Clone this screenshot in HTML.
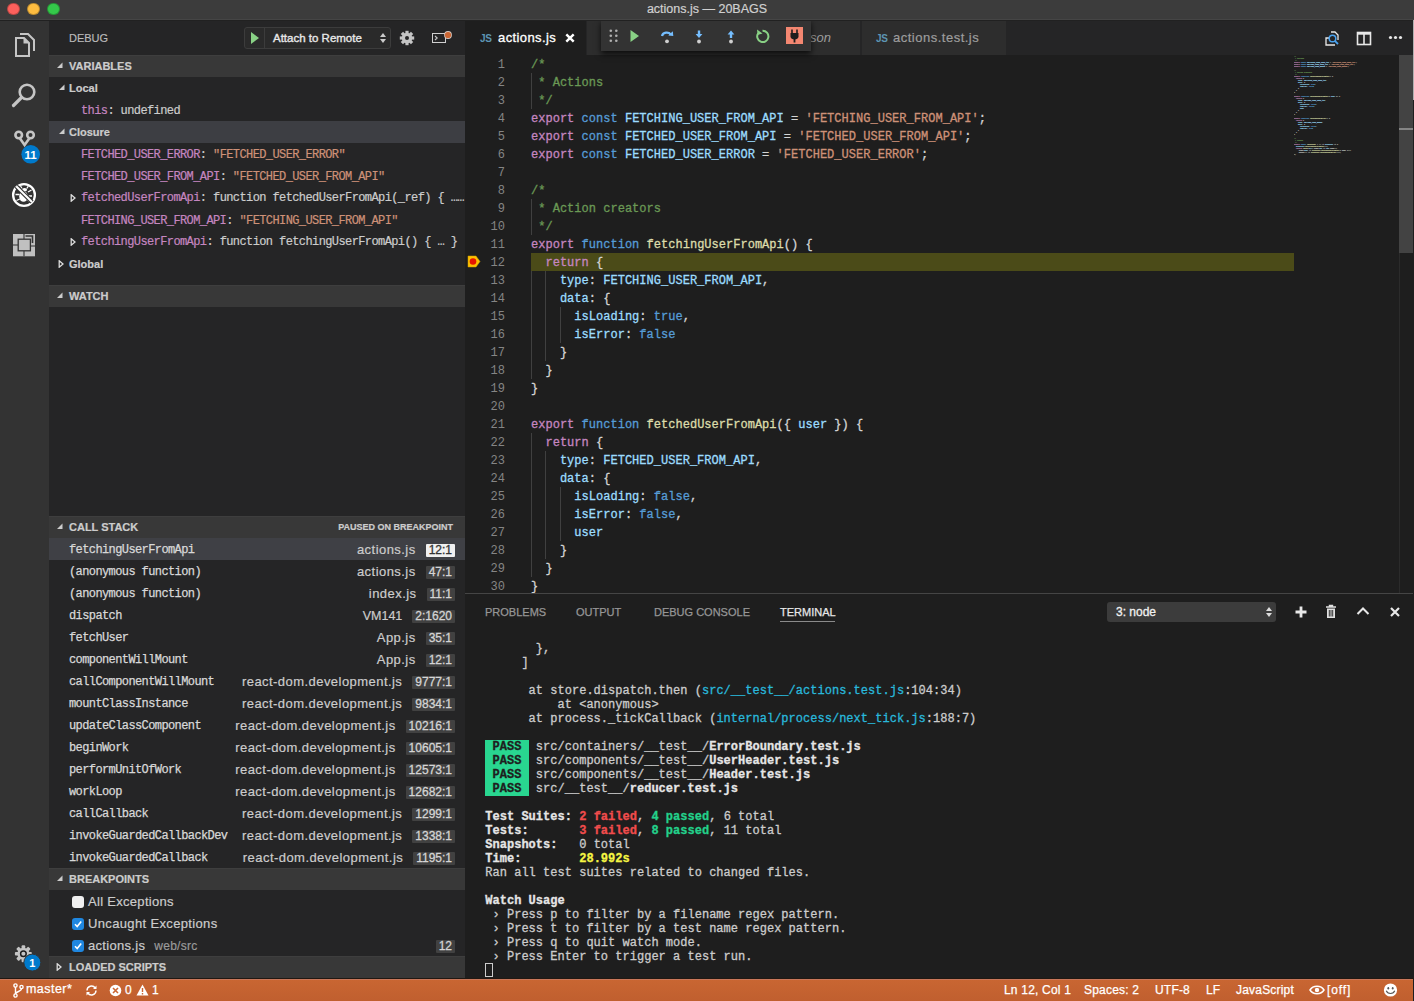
<!DOCTYPE html>
<html><head><meta charset="utf-8">
<style>
*{box-sizing:border-box;margin:0;padding:0}
html,body{width:1414px;height:1001px;overflow:hidden;background:#1e1e1e;font-family:"Liberation Sans",sans-serif;}
.abs{position:absolute}
#title{left:0;top:0;width:1414px;height:20px;background:#3c3c3c;box-shadow:inset 0 -1px 0 #454545;z-index:2}
#title .t{position:absolute;left:0;width:1414px;top:2px;text-align:center;color:#d0d0d0;-webkit-text-stroke:0.2px currentColor;font-size:12.5px;line-height:14px}
.tl{position:absolute;top:2.5px;width:12.5px;height:12.5px;border-radius:50%;border:0.6px solid rgba(0,0,0,0.25)}
#act{left:0;top:20px;width:49px;height:959px;background:#333333}
#side{left:49px;top:20px;width:416px;height:959px;background:#252526;overflow:hidden}
#editor{left:465px;top:20px;width:949px;height:959px;background:#1e1e1e}
#status{left:0;top:979px;width:1414px;height:22px;background:linear-gradient(#c96632,#c05f2f);box-shadow:inset 0 1px 0 #c9775a;color:#fff;font-size:12px}
.mono{font-family:"Liberation Mono",monospace;-webkit-text-stroke:0.25px currentColor}
.sh{position:absolute;left:0;width:416px;height:22px;background:#383838;color:#cccccc;font-weight:bold;font-size:11px;line-height:22px;-webkit-text-stroke:0.2px currentColor;box-shadow:inset 0 1px 0 #3e3e3e}
.sh .tri{position:absolute;left:8px;top:0}
.sh .lab{position:absolute;left:20px;top:0}
.row{position:absolute;left:0;width:416px;height:22px;line-height:22px;color:#cccccc;white-space:nowrap;-webkit-text-stroke:0.2px currentColor}
.fn{letter-spacing:0.45px}
.badge{display:inline-block;background:#414141;color:#d4d4d4;font-size:12px;line-height:13px;height:13px;padding:0 3px;border-radius:1px;margin-left:10px;vertical-align:0px;letter-spacing:0;-webkit-text-stroke:0.3px currentColor}
.badge.sel{background:#f0f0f0;color:#333}
.jsi{font-size:10px;color:#5d95b3;font-weight:bold;line-height:12px;letter-spacing:-0.3px;margin-top:1.5px}
.tabt{top:20px;height:35px;line-height:35px;font-size:13px}
.ln{position:absolute;left:465px;width:40px;text-align:right;font-family:"Liberation Mono",monospace;font-size:12px;line-height:18px;height:18px;color:#858585}
.cl{position:absolute;left:531px;letter-spacing:0.02px;-webkit-text-stroke:0.3px currentColor;font-family:"Liberation Mono",monospace;font-size:12px;line-height:18px;height:18px;white-space:pre;color:#d4d4d4}
.ig{position:absolute;width:1px;background:#404040}
.bphl{position:absolute;left:531px;top:253px;width:763px;height:18px;background:#4b4b18}
.c{color:#6a9955}.k{color:#c586c0}.s{color:#569cd6}.v{color:#9cdcfe}.t{color:#ce9178}.f{color:#dcdcaa}.p{color:#9cdcfe}.b{color:#569cd6}.d{color:#d4d4d4}
.ptab{top:593px;height:38px;line-height:38px;font-size:11px;color:#969696;-webkit-text-stroke:0.25px currentColor}
.tl2{position:absolute;left:485.3px;letter-spacing:0.02px;-webkit-text-stroke:0.3px currentColor;font-family:"Liberation Mono",monospace;font-size:12px;line-height:14px;height:14px;white-space:pre;color:#cccccc}
.xl{color:#29b8db}.xB{font-weight:bold;color:#e5e5e5}.xR{color:#f14c4c;font-weight:bold}.xG{color:#23d18b;font-weight:bold}.xY{color:#f5f543;font-weight:bold}
.xpass{background:#29d690;color:#1e1e1e;font-weight:bold}
.sbt{position:absolute;top:0;height:22px;line-height:22px;font-size:12px;color:#fff;letter-spacing:0.2px;-webkit-text-stroke:0.25px currentColor}
</style></head><body>
<div id="title" class="abs">
  <div class="tl" style="left:7px;background:#fc605c"></div>
  <div class="tl" style="left:27px;background:#fdbc40"></div>
  <div class="tl" style="left:47px;background:#34c84a"></div>
  <div class="t">actions.js — 20BAGS</div>
</div>
<div class="abs" style="left:0;top:20px;width:1413px;height:1px;background:#212121;z-index:2"></div>
<div id="act" class="abs">
<svg class="abs" style="left:0;top:0" width="49" height="959" viewBox="0 20 49 959">
 <g fill="none" stroke="#c5c5c5" stroke-width="2">
  <path d="M20 34 H28 L34 40 V51"/>
  <path d="M16 38 H24 L29 43 V56 H16 Z"/>
 </g>
 <path d="M24 38 V43 H29" fill="#c5c5c5"/>
 <path d="M23.5 37.5 L29.5 43.5 H23.5 Z" fill="#c5c5c5"/>
 <g fill="none" stroke="#c5c5c5">
  <circle cx="27" cy="92" r="7.3" stroke-width="2.6"/>
  <path d="M21.5 97.5 L13.5 105.5" stroke-width="3.2" stroke-linecap="round"/>
 </g>
 <g fill="none" stroke="#c5c5c5" stroke-width="2.6">
  <circle cx="18.7" cy="135" r="3.3"/>
  <circle cx="30.5" cy="135" r="3.3"/>
  <path d="M19.8 138.3 L24.6 145 L29.4 138.3"/>
 </g>
 <circle cx="30.7" cy="154.3" r="9.3" fill="#007acc"/>
 <text x="30.7" y="158.5" font-family="Liberation Sans" font-weight="bold" font-size="11.5" fill="#fff" text-anchor="middle">11</text>
 <circle cx="24" cy="195" r="10.9" fill="none" stroke="#ffffff" stroke-width="2.3"/>
 <g fill="#ffffff">
  <ellipse cx="23.5" cy="196.5" rx="4.3" ry="5.2"/>
  <ellipse cx="24.5" cy="189.8" rx="2.6" ry="1.8"/>
 </g>
 <g stroke="#ffffff" stroke-width="1.3" fill="none">
  <path d="M15.5 194.5 H19.5 M16.5 200.5 L19.8 199 M28 192 L31.5 190 M28.5 196 H32 M27.5 200 L30.5 202"/>
  <path d="M22 188.5 L20.5 186.2 M26.8 188.5 L28.3 186.2"/>
 </g>
 <path d="M16.2 186.2 L32 202" stroke="#333333" stroke-width="4.4"/>
 <path d="M16.2 186.2 L32 202" stroke="#ffffff" stroke-width="2.1"/>
 <rect x="13" y="234" width="22" height="22.3" fill="#c0c0c0"/>
 <rect x="18.2" y="239.2" width="12.2" height="11.6" fill="#c0c0c0" stroke="#333" stroke-width="1.3"/>
 <path d="M24 234 V239 M18 245 H13 M30.5 246 H35 M24 251 V256.3" stroke="#333" stroke-width="1.1"/>
 <path d="M25.5 236 H32.5 V243" fill="none" stroke="#333" stroke-width="1.6"/>
 <g transform="translate(23.4,953.8)">
  <circle r="6" fill="#c5c5c5"/>
  <g fill="#c5c5c5"><rect x="-1.8" y="-8.5" width="3.6" height="17" rx="1"/><rect x="-1.8" y="-8.5" width="3.6" height="17" rx="1" transform="rotate(45)"/><rect x="-1.8" y="-8.5" width="3.6" height="17" rx="1" transform="rotate(90)"/><rect x="-1.8" y="-8.5" width="3.6" height="17" rx="1" transform="rotate(135)"/></g>
  <circle r="2.8" fill="#c5c5c5" stroke="#1e1e1e" stroke-width="1.5"/>
 </g>
 <circle cx="32.3" cy="962.6" r="8.5" fill="#007acc" stroke="#333" stroke-width="1"/>
 <text x="32.3" y="966.8" font-family="Liberation Sans" font-weight="bold" font-size="11" fill="#fff" text-anchor="middle">1</text>
</svg>
</div>

<div id="side" class="abs">
  <div class="abs" style="left:20px;top:1px;height:35px;line-height:35px;font-size:11px;color:#bbbbbb;-webkit-text-stroke:0.15px currentColor">DEBUG</div>
  <div class="abs" style="left:195px;top:7px;width:147px;height:22px;border:1px solid #3c3c3c;border-radius:3px;background:#2a2a2a"></div>
  <div class="abs" style="left:215px;top:8px;width:1px;height:20px;background:#3c3c3c"></div>
  <svg class="abs" style="left:199px;top:11px" width="14" height="14"><path d="M3 1 L11 7 L3 13 Z" fill="#89d185"/></svg>
  <div class="abs" style="left:224px;top:7px;height:22px;line-height:22px;font-size:11.5px;color:#e8e8e8;-webkit-text-stroke:0.35px currentColor">Attach to Remote</div>
  <svg class="abs" style="left:330px;top:12px" width="8" height="12"><path d="M1 5 L4 1 L7 5 Z M1 7 L4 11 L7 7 Z" fill="#cccccc"/></svg>
  <svg class="abs" style="left:350px;top:10px" width="16" height="16" viewBox="-8 -8 16 16"><g fill="#c5c5c5"><circle r="5.2"/><rect x="-1.6" y="-7.2" width="3.2" height="14.4"/><rect x="-1.6" y="-7.2" width="3.2" height="14.4" transform="rotate(45)"/><rect x="-1.6" y="-7.2" width="3.2" height="14.4" transform="rotate(90)"/><rect x="-1.6" y="-7.2" width="3.2" height="14.4" transform="rotate(135)"/></g><circle r="2" fill="#252526"/></svg>
  <svg class="abs" style="left:381px;top:8px" width="22" height="20" viewBox="0 0 22 20"><rect x="2.5" y="5.5" width="13" height="9" fill="none" stroke="#d0d0d0" stroke-width="1"/><path d="M5 8 L7.2 10 L5 12" fill="none" stroke="#c5c5c5" stroke-width="1.1"/><circle cx="18" cy="7" r="3.9" fill="#d8c8c0"/><circle cx="18" cy="7" r="3.1" fill="#cc6633"/></svg>

  <div class="sh" style="top:35px"><svg class="tri" style="left:7px;top:7px" width="7" height="7"><path d="M6.5 0.5 V6 H1 Z" fill="#cccccc"/></svg><span class="lab">VARIABLES</span></div>

  <div class="row" style="top:57px"><svg class="abs" style="left:9px;top:7px" width="7" height="7"><path d="M6.5 0.5 V6 H1 Z" fill="#cccccc"/></svg><span class="abs" style="left:20px;font-weight:bold;font-size:11px">Local</span></div>
  <div class="row mono" style="top:79px;font-size:12px;letter-spacing:-0.6px"><span class="abs" style="left:32px;top:1px"><span style="color:#c586c0">this</span>: undefined</span></div>
  <div class="row" style="top:101px;background:#3d3e43"><svg class="abs" style="left:9px;top:7px" width="7" height="7"><path d="M6.5 0.5 V6 H1 Z" fill="#cccccc"/></svg><span class="abs" style="left:20px;font-weight:bold;font-size:11px">Closure</span></div>
  <div class="row mono" style="top:123px;font-size:12px;letter-spacing:-0.6px"><span class="abs" style="left:32px;top:1px"><span style="color:#c586c0">FETCHED_USER_ERROR</span>: <span style="color:#ce9178">"FETCHED_USER_ERROR"</span></span></div>
  <div class="row mono" style="top:145px;font-size:12px;letter-spacing:-0.6px"><span class="abs" style="left:32px;top:1px"><span style="color:#c586c0">FETCHED_USER_FROM_API</span>: <span style="color:#ce9178">"FETCHED_USER_FROM_API"</span></span></div>
  <div class="row mono" style="top:167px;font-size:12px;letter-spacing:-0.6px"><svg class="abs" style="left:21px;top:7px" width="6" height="8"><path d="M1.2 0.8 L5 4 L1.2 7.2 Z" fill="none" stroke="#e0e0e0" stroke-width="1.25"/></svg><span class="abs" style="left:32px"><span style="color:#c586c0">fetchedUserFromApi</span>: function fetchedUserFromApi(_ref) { ……</span></div>
  <div class="row mono" style="top:189px;font-size:12px;letter-spacing:-0.6px"><span class="abs" style="left:32px;top:1px"><span style="color:#c586c0">FETCHING_USER_FROM_API</span>: <span style="color:#ce9178">"FETCHING_USER_FROM_API"</span></span></div>
  <div class="row mono" style="top:211px;font-size:12px;letter-spacing:-0.6px"><svg class="abs" style="left:21px;top:7px" width="6" height="8"><path d="M1.2 0.8 L5 4 L1.2 7.2 Z" fill="none" stroke="#e0e0e0" stroke-width="1.25"/></svg><span class="abs" style="left:32px"><span style="color:#c586c0">fetchingUserFromApi</span>: function fetchingUserFromApi() { … }</span></div>
  <div class="row" style="top:233px"><svg class="abs" style="left:9px;top:7px" width="6" height="8"><path d="M1.2 0.8 L5 4 L1.2 7.2 Z" fill="none" stroke="#e0e0e0" stroke-width="1.25"/></svg><span class="abs" style="left:20px;font-weight:bold;font-size:11px">Global</span></div>

  <div class="sh" style="top:265px"><svg class="tri" style="left:7px;top:7px" width="7" height="7"><path d="M6.5 0.5 V6 H1 Z" fill="#cccccc"/></svg><span class="lab">WATCH</span></div>

  <div class="sh" style="top:496px"><svg class="tri" style="left:7px;top:7px" width="7" height="7"><path d="M6.5 0.5 V6 H1 Z" fill="#cccccc"/></svg><span class="lab">CALL STACK</span><span class="abs" style="right:12px;top:0;font-size:9px">PAUSED ON BREAKPOINT</span></div>
  <div class="row" style="top:518px;background:#3f4045;"><span class="abs mono" style="left:20px;top:1px;font-size:12px;letter-spacing:-0.6px;color:#d8d8d8">fetchingUserFromApi</span><span class="abs" style="right:10px;top:1px;font-size:13px"><span class="fn">actions.js</span><span class="badge sel">12:1</span></span></div>
  <div class="row" style="top:540px;"><span class="abs mono" style="left:20px;top:1px;font-size:12px;letter-spacing:-0.6px;color:#d8d8d8">(anonymous function)</span><span class="abs" style="right:10px;top:1px;font-size:13px"><span class="fn">actions.js</span><span class="badge">47:1</span></span></div>
  <div class="row" style="top:562px;"><span class="abs mono" style="left:20px;top:1px;font-size:12px;letter-spacing:-0.6px;color:#d8d8d8">(anonymous function)</span><span class="abs" style="right:10px;top:1px;font-size:13px"><span class="fn">index.js</span><span class="badge">11:1</span></span></div>
  <div class="row" style="top:584px;"><span class="abs mono" style="left:20px;top:1px;font-size:12px;letter-spacing:-0.6px;color:#d8d8d8">dispatch</span><span class="abs" style="right:10px;top:1px;font-size:13px"><span class="fn" style="font-size:12.5px;letter-spacing:0">VM141</span><span class="badge">2:1620</span></span></div>
  <div class="row" style="top:606px;"><span class="abs mono" style="left:20px;top:1px;font-size:12px;letter-spacing:-0.6px;color:#d8d8d8">fetchUser</span><span class="abs" style="right:10px;top:1px;font-size:13px"><span class="fn">App.js</span><span class="badge">35:1</span></span></div>
  <div class="row" style="top:628px;"><span class="abs mono" style="left:20px;top:1px;font-size:12px;letter-spacing:-0.6px;color:#d8d8d8">componentWillMount</span><span class="abs" style="right:10px;top:1px;font-size:13px"><span class="fn">App.js</span><span class="badge">12:1</span></span></div>
  <div class="row" style="top:650px;"><span class="abs mono" style="left:20px;top:1px;font-size:12px;letter-spacing:-0.6px;color:#d8d8d8">callComponentWillMount</span><span class="abs" style="right:10px;top:1px;font-size:13px"><span class="fn">react-dom.development.js</span><span class="badge">9777:1</span></span></div>
  <div class="row" style="top:672px;"><span class="abs mono" style="left:20px;top:1px;font-size:12px;letter-spacing:-0.6px;color:#d8d8d8">mountClassInstance</span><span class="abs" style="right:10px;top:1px;font-size:13px"><span class="fn">react-dom.development.js</span><span class="badge">9834:1</span></span></div>
  <div class="row" style="top:694px;"><span class="abs mono" style="left:20px;top:1px;font-size:12px;letter-spacing:-0.6px;color:#d8d8d8">updateClassComponent</span><span class="abs" style="right:10px;top:1px;font-size:13px"><span class="fn">react-dom.development.js</span><span class="badge">10216:1</span></span></div>
  <div class="row" style="top:716px;"><span class="abs mono" style="left:20px;top:1px;font-size:12px;letter-spacing:-0.6px;color:#d8d8d8">beginWork</span><span class="abs" style="right:10px;top:1px;font-size:13px"><span class="fn">react-dom.development.js</span><span class="badge">10605:1</span></span></div>
  <div class="row" style="top:738px;"><span class="abs mono" style="left:20px;top:1px;font-size:12px;letter-spacing:-0.6px;color:#d8d8d8">performUnitOfWork</span><span class="abs" style="right:10px;top:1px;font-size:13px"><span class="fn">react-dom.development.js</span><span class="badge">12573:1</span></span></div>
  <div class="row" style="top:760px;"><span class="abs mono" style="left:20px;top:1px;font-size:12px;letter-spacing:-0.6px;color:#d8d8d8">workLoop</span><span class="abs" style="right:10px;top:1px;font-size:13px"><span class="fn">react-dom.development.js</span><span class="badge">12682:1</span></span></div>
  <div class="row" style="top:782px;"><span class="abs mono" style="left:20px;top:1px;font-size:12px;letter-spacing:-0.6px;color:#d8d8d8">callCallback</span><span class="abs" style="right:10px;top:1px;font-size:13px"><span class="fn">react-dom.development.js</span><span class="badge">1299:1</span></span></div>
  <div class="row" style="top:804px;"><span class="abs mono" style="left:20px;top:1px;font-size:12px;letter-spacing:-0.6px;color:#d8d8d8">invokeGuardedCallbackDev</span><span class="abs" style="right:10px;top:1px;font-size:13px"><span class="fn">react-dom.development.js</span><span class="badge">1338:1</span></span></div>
  <div class="row" style="top:826px;"><span class="abs mono" style="left:20px;top:1px;font-size:12px;letter-spacing:-0.6px;color:#d8d8d8">invokeGuardedCallback</span><span class="abs" style="right:10px;top:1px;font-size:13px"><span class="fn">react-dom.development.js</span><span class="badge">1195:1</span></span></div>
  <div class="sh" style="top:848px"><svg class="tri" style="left:7px;top:7px" width="7" height="7"><path d="M6.5 0.5 V6 H1 Z" fill="#cccccc"/></svg><span class="lab">BREAKPOINTS</span></div>
  <div class="row" style="top:871px;font-size:13px;letter-spacing:0.3px"><div class="abs" style="left:23px;top:5px;width:12px;height:12px;border-radius:3px;background:#f0f0f0"></div><span class="abs" style="left:39px">All Exceptions</span></div>
  <div class="row" style="top:893px;font-size:13px;letter-spacing:0.35px"><svg class="abs" style="left:23px;top:5px" width="12" height="12"><rect width="12" height="12" rx="3" fill="#1f87e0"/><path d="M3 6.2 L5.2 8.5 L9.2 3.5" fill="none" stroke="#fff" stroke-width="1.6"/></svg><span class="abs" style="left:39px">Uncaught Exceptions</span></div>
  <div class="row" style="top:915px;font-size:13px;letter-spacing:0.3px"><svg class="abs" style="left:23px;top:5px" width="12" height="12"><rect width="12" height="12" rx="3" fill="#1f87e0"/><path d="M3 6.2 L5.2 8.5 L9.2 3.5" fill="none" stroke="#fff" stroke-width="1.6"/></svg><span class="abs" style="left:39px">actions.js<span style="color:#9a9a9a;font-size:12px;margin-left:9px;letter-spacing:0.3px">web/src</span></span><span class="abs badge" style="right:10px;top:5px">12</span></div>
  <div class="sh" style="top:936px"><svg class="tri" style="left:7px;top:7px" width="6" height="8"><path d="M1.2 0.8 L5 4 L1.2 7.2 Z" fill="none" stroke="#e0e0e0" stroke-width="1.25"/></svg><span class="lab">LOADED SCRIPTS</span></div>
</div>
<div id="editor" class="abs"></div>
<div class="abs" style="left:465px;top:20px;width:949px;height:35px;background:#252526"></div>
<div class="abs" style="left:465px;top:20px;width:121px;height:35px;background:#1e1e1e"></div>
<div class="abs" style="left:586px;top:20px;width:274px;height:35px;background:#2d2d2d;border-left:1px solid #252526"></div>
<div class="abs" style="left:861px;top:20px;width:145px;height:35px;background:#2d2d2d;border-left:1px solid #252526"></div>
<div class="abs jsi" style="left:480px;top:31px">JS</div>
<div class="abs tabt" style="left:498px;color:#ffffff;letter-spacing:0.4px;-webkit-text-stroke:0.3px currentColor">actions.js</div>
<svg class="abs" style="left:564px;top:32px" width="12" height="12"><path d="M2.3 2.3 L9.7 9.7 M9.7 2.3 L2.3 9.7" stroke="#ffffff" stroke-width="2.4"/></svg>
<div class="abs tabt" style="left:810px;color:#9d9d9d;font-style:italic">son</div>
<div class="abs jsi" style="left:876px;top:31px">JS</div>
<div class="abs tabt" style="left:893px;color:#9d9d9d;letter-spacing:0.5px;-webkit-text-stroke:0.2px currentColor">actions.test.js</div>
<!-- editor actions -->
<svg class="abs" style="left:1323px;top:29px" width="18" height="18" viewBox="0 0 18 18"><path d="M6 9 H3 V16 H12 M8 3 H12 L15 6 V11" fill="none" stroke="#e8e8e8" stroke-width="1.3"/><circle cx="9.5" cy="9.5" r="3.3" fill="#252526" stroke="#4aa3f0" stroke-width="1.5"/><path d="M11.9 11.9 L15 15" stroke="#4aa3f0" stroke-width="1.8"/></svg>
<svg class="abs" style="left:1356px;top:31px" width="16" height="15" viewBox="0 0 16 15"><rect x="1.5" y="1.5" width="13" height="12" fill="none" stroke="#e8e8e8" stroke-width="1.6"/><rect x="1.5" y="1.5" width="13" height="2.2" fill="#e8e8e8"/><path d="M8 2 V13.5" stroke="#e8e8e8" stroke-width="1.6"/></svg>
<svg class="abs" style="left:1388px;top:34px" width="16" height="8"><circle cx="2.5" cy="3.5" r="1.6" fill="#e8e8e8"/><circle cx="7.5" cy="3.5" r="1.6" fill="#e8e8e8"/><circle cx="12.5" cy="3.5" r="1.6" fill="#e8e8e8"/></svg>
<!-- scrollbar / overview -->
<div class="abs" style="left:1399px;top:55px;width:1px;height:538px;background:#2b2b2b"></div>
<div class="abs" style="left:1399px;top:55px;width:14px;height:198px;background:#434343"></div>
<div class="abs" style="left:1399px;top:128px;width:14px;height:2px;background:#858585"></div>
<div class="abs" style="left:1413px;top:0;width:1px;height:100px;background:#b0b0b0"></div>
<div class="ig" style="left:531px;top:73px;height:36px"></div>
<div class="ig" style="left:531px;top:199px;height:36px"></div>
<div class="ig" style="left:531px;top:253px;height:126px"></div>
<div class="ig" style="left:545px;top:271px;height:90px"></div>
<div class="ig" style="left:560px;top:307px;height:36px"></div>
<div class="ig" style="left:531px;top:433px;height:144px"></div>
<div class="ig" style="left:545px;top:451px;height:108px"></div>
<div class="ig" style="left:560px;top:487px;height:54px"></div>
<div class="bphl"></div>
<div class="ln" style="top:56px">1</div>
<div class="cl" style="top:56px"><span class="c">/*</span></div>
<div class="ln" style="top:74px">2</div>
<div class="cl" style="top:74px"><span class="c"> * Actions</span></div>
<div class="ln" style="top:92px">3</div>
<div class="cl" style="top:92px"><span class="c"> */</span></div>
<div class="ln" style="top:110px">4</div>
<div class="cl" style="top:110px"><span class="k">export</span><span class="d"> </span><span class="s">const</span><span class="d"> </span><span class="v">FETCHING_USER_FROM_API</span><span class="d"> = </span><span class="t">&#x27;FETCHING_USER_FROM_API&#x27;</span><span class="d">;</span></div>
<div class="ln" style="top:128px">5</div>
<div class="cl" style="top:128px"><span class="k">export</span><span class="d"> </span><span class="s">const</span><span class="d"> </span><span class="v">FETCHED_USER_FROM_API</span><span class="d"> = </span><span class="t">&#x27;FETCHED_USER_FROM_API&#x27;</span><span class="d">;</span></div>
<div class="ln" style="top:146px">6</div>
<div class="cl" style="top:146px"><span class="k">export</span><span class="d"> </span><span class="s">const</span><span class="d"> </span><span class="v">FETCHED_USER_ERROR</span><span class="d"> = </span><span class="t">&#x27;FETCHED_USER_ERROR&#x27;</span><span class="d">;</span></div>
<div class="ln" style="top:164px">7</div>
<div class="cl" style="top:164px"></div>
<div class="ln" style="top:182px">8</div>
<div class="cl" style="top:182px"><span class="c">/*</span></div>
<div class="ln" style="top:200px">9</div>
<div class="cl" style="top:200px"><span class="c"> * Action creators</span></div>
<div class="ln" style="top:218px">10</div>
<div class="cl" style="top:218px"><span class="c"> */</span></div>
<div class="ln" style="top:236px">11</div>
<div class="cl" style="top:236px"><span class="k">export</span><span class="d"> </span><span class="s">function</span><span class="d"> </span><span class="f">fetchingUserFromApi</span><span class="d">() {</span></div>
<div class="ln" style="top:254px">12</div>
<div class="cl" style="top:254px"><span class="d">  </span><span class="k">return</span><span class="d"> {</span></div>
<div class="ln" style="top:272px">13</div>
<div class="cl" style="top:272px"><span class="d">    </span><span class="p">type</span><span class="d">: </span><span class="v">FETCHING_USER_FROM_API</span><span class="d">,</span></div>
<div class="ln" style="top:290px">14</div>
<div class="cl" style="top:290px"><span class="d">    </span><span class="p">data</span><span class="d">: {</span></div>
<div class="ln" style="top:308px">15</div>
<div class="cl" style="top:308px"><span class="d">      </span><span class="p">isLoading</span><span class="d">: </span><span class="b">true</span><span class="d">,</span></div>
<div class="ln" style="top:326px">16</div>
<div class="cl" style="top:326px"><span class="d">      </span><span class="p">isError</span><span class="d">: </span><span class="b">false</span></div>
<div class="ln" style="top:344px">17</div>
<div class="cl" style="top:344px"><span class="d">    }</span></div>
<div class="ln" style="top:362px">18</div>
<div class="cl" style="top:362px"><span class="d">  }</span></div>
<div class="ln" style="top:380px">19</div>
<div class="cl" style="top:380px"><span class="d">}</span></div>
<div class="ln" style="top:398px">20</div>
<div class="cl" style="top:398px"></div>
<div class="ln" style="top:416px">21</div>
<div class="cl" style="top:416px"><span class="k">export</span><span class="d"> </span><span class="s">function</span><span class="d"> </span><span class="f">fetchedUserFromApi</span><span class="d">({ </span><span class="p">user</span><span class="d"> }) {</span></div>
<div class="ln" style="top:434px">22</div>
<div class="cl" style="top:434px"><span class="d">  </span><span class="k">return</span><span class="d"> {</span></div>
<div class="ln" style="top:452px">23</div>
<div class="cl" style="top:452px"><span class="d">    </span><span class="p">type</span><span class="d">: </span><span class="v">FETCHED_USER_FROM_API</span><span class="d">,</span></div>
<div class="ln" style="top:470px">24</div>
<div class="cl" style="top:470px"><span class="d">    </span><span class="p">data</span><span class="d">: {</span></div>
<div class="ln" style="top:488px">25</div>
<div class="cl" style="top:488px"><span class="d">      </span><span class="p">isLoading</span><span class="d">: </span><span class="b">false</span><span class="d">,</span></div>
<div class="ln" style="top:506px">26</div>
<div class="cl" style="top:506px"><span class="d">      </span><span class="p">isError</span><span class="d">: </span><span class="b">false</span><span class="d">,</span></div>
<div class="ln" style="top:524px">27</div>
<div class="cl" style="top:524px"><span class="d">      </span><span class="p">user</span></div>
<div class="ln" style="top:542px">28</div>
<div class="cl" style="top:542px"><span class="d">    }</span></div>
<div class="ln" style="top:560px">29</div>
<div class="cl" style="top:560px"><span class="d">  }</span></div>
<div class="ln" style="top:578px">30</div>
<div class="cl" style="top:578px"><span class="d">}</span></div>
<div class="abs" style="left:1294px;top:56px;width:105px;height:100px;overflow:hidden;opacity:0.85"><div style="position:absolute;left:0;top:0;transform-origin:0 0;transform:scale(0.1389,0.1111);font-family:'Liberation Mono',monospace;font-size:12px;line-height:18px;white-space:pre;-webkit-text-stroke:1.2px currentColor;color:#d4d4d4"><span class="c">/*</span><br><span class="c"> * Actions</span><br><span class="c"> */</span><br><span class="k">export</span><span class="d"> </span><span class="s">const</span><span class="d"> </span><span class="v">FETCHING_USER_FROM_API</span><span class="d"> = </span><span class="t">&#x27;FETCHING_USER_FROM_API&#x27;</span><span class="d">;</span><br><span class="k">export</span><span class="d"> </span><span class="s">const</span><span class="d"> </span><span class="v">FETCHED_USER_FROM_API</span><span class="d"> = </span><span class="t">&#x27;FETCHED_USER_FROM_API&#x27;</span><span class="d">;</span><br><span class="k">export</span><span class="d"> </span><span class="s">const</span><span class="d"> </span><span class="v">FETCHED_USER_ERROR</span><span class="d"> = </span><span class="t">&#x27;FETCHED_USER_ERROR&#x27;</span><span class="d">;</span><br><br><span class="c">/*</span><br><span class="c"> * Action creators</span><br><span class="c"> */</span><br><span class="k">export</span><span class="d"> </span><span class="s">function</span><span class="d"> </span><span class="f">fetchingUserFromApi</span><span class="d">() {</span><br><span class="d">  </span><span class="k">return</span><span class="d"> {</span><br><span class="d">    </span><span class="p">type</span><span class="d">: </span><span class="v">FETCHING_USER_FROM_API</span><span class="d">,</span><br><span class="d">    </span><span class="p">data</span><span class="d">: {</span><br><span class="d">      </span><span class="p">isLoading</span><span class="d">: </span><span class="b">true</span><span class="d">,</span><br><span class="d">      </span><span class="p">isError</span><span class="d">: </span><span class="b">false</span><br><span class="d">    }</span><br><span class="d">  }</span><br><span class="d">}</span><br><br><span class="k">export</span><span class="d"> </span><span class="s">function</span><span class="d"> </span><span class="f">fetchedUserFromApi</span><span class="d">({ </span><span class="p">user</span><span class="d"> }) {</span><br><span class="d">  </span><span class="k">return</span><span class="d"> {</span><br><span class="d">    </span><span class="p">type</span><span class="d">: </span><span class="v">FETCHED_USER_FROM_API</span><span class="d">,</span><br><span class="d">    </span><span class="p">data</span><span class="d">: {</span><br><span class="d">      </span><span class="p">isLoading</span><span class="d">: </span><span class="b">false</span><span class="d">,</span><br><span class="d">      </span><span class="p">isError</span><span class="d">: </span><span class="b">false</span><span class="d">,</span><br><span class="d">      </span><span class="p">user</span><br><span class="d">    }</span><br><span class="d">  }</span><br><span class="d">}</span><br><br><span class="k">export</span><span class="d"> </span><span class="s">function</span><span class="d"> </span><span class="f">fetchedUserError</span><span class="d">() {</span><br><span class="d">  </span><span class="k">return</span><span class="d"> {</span><br><span class="d">    </span><span class="p">type</span><span class="d">: </span><span class="v">FETCHED_USER_ERROR</span><span class="d">,</span><br><span class="d">    </span><span class="p">data</span><span class="d">: {</span><br><span class="d">      </span><span class="p">isLoading</span><span class="d">: </span><span class="b">false</span><span class="d">,</span><br><span class="d">      </span><span class="p">isError</span><span class="d">: </span><span class="b">true</span><br><span class="d">    }</span><br><span class="d">  }</span><br><span class="d">}</span><br><br><span class="c">/*</span><br><span class="c"> * Thunks</span><br><span class="c"> */</span><br><span class="k">export</span><span class="d"> </span><span class="s">const</span><span class="d"> </span><span class="f">fetchUser</span><span class="d"> = () =&gt; </span><span class="p">dispatch</span><span class="d"> =&gt; {</span><br><span class="d">  </span><span class="p">dispatch</span><span class="d">(</span><span class="f">fetchingUserFromApi</span><span class="d">());</span><br><span class="d">  </span><span class="k">return</span><span class="d"> </span><span class="f">fetch</span><span class="d">(</span><span class="p">url</span><span class="d">).then(</span><span class="p">res</span><span class="d"> =&gt; </span><span class="p">res</span><span class="d">.json())</span><br><span class="d">    .then(</span><span class="p">user</span><span class="d"> =&gt; </span><span class="f">dispatch</span><span class="d">(</span><span class="f">fetchedUserFromApi</span><span class="d">({ user })))</span><br><span class="d">    .catch(() =&gt; </span><span class="f">dispatch</span><span class="d">(</span><span class="f">fetchedUserError</span><span class="d">()));</span><br><span class="d">};</span></div></div>
<svg class="abs" style="left:467px;top:255px" width="14" height="13" viewBox="0 0 14 13"><path d="M1 1 H9 L13 6.5 L9 12 H1 Z" fill="#fcc000" stroke="#d29d00" stroke-width="0.5"/><circle cx="6" cy="6.5" r="3.3" fill="#e51400"/></svg>
<div class="abs" style="left:601px;top:20px;width:210px;height:31px;background:#333333;box-shadow:0 3px 6px rgba(0,0,0,0.75)"></div>
<svg class="abs" style="left:609px;top:29px" width="10" height="14"><g fill="#b0b0b0"><circle cx="1.8" cy="1.8" r="1.3"/><circle cx="7.3" cy="1.8" r="1.3"/><circle cx="1.8" cy="6.8" r="1.3"/><circle cx="7.3" cy="6.8" r="1.3"/><circle cx="1.8" cy="11.8" r="1.3"/><circle cx="7.3" cy="11.8" r="1.3"/></g></svg>
<svg class="abs" style="left:629px;top:29px" width="12" height="14"><path d="M1.5 1 L10 7 L1.5 13 Z" fill="#89d185"/></svg>
<svg class="abs" style="left:658px;top:27px" width="18" height="18" viewBox="0 0 18 18"><path d="M4 9 C5 5, 10.5 4.5, 12.8 7.5" fill="none" stroke="#75beff" stroke-width="2.3"/><path d="M10.3 8.6 L15.3 9 L14.8 4.2 Z" fill="#75beff"/><circle cx="9" cy="14.3" r="1.9" fill="#d0d0d0"/></svg>
<svg class="abs" style="left:691px;top:27px" width="16" height="18" viewBox="0 0 16 18"><path d="M8 3.5 V8" stroke="#75beff" stroke-width="2.4"/><path d="M4.6 7 H11.4 L8 11 Z" fill="#75beff"/><circle cx="8" cy="14.5" r="1.9" fill="#d0d0d0"/></svg>
<svg class="abs" style="left:723px;top:27px" width="16" height="18" viewBox="0 0 16 18"><path d="M8 6.5 V11" stroke="#75beff" stroke-width="2.4"/><path d="M4.6 7.5 H11.4 L8 3.5 Z" fill="#75beff"/><circle cx="8" cy="14.5" r="1.9" fill="#d0d0d0"/></svg>
<svg class="abs" style="left:754px;top:28px" width="17" height="17" viewBox="0 0 17 17"><path d="M4.2 5.2 A5.6 5.6 0 1 0 8.5 2.8" fill="none" stroke="#89d185" stroke-width="2"/><path d="M3 1.5 L3.5 7 L8.5 5.5 Z" fill="#89d185"/></svg>
<div class="abs" style="left:786px;top:27px;width:17px;height:17px;background:#f48771"></div>
<svg class="abs" style="left:786px;top:27px" width="17" height="17" viewBox="0 0 17 17"><path d="M6 2.5 V6 M11 2.5 V6" stroke="#1e1e1e" stroke-width="1.6"/><path d="M4.5 6 H12.5 V9.5 C12.5 11.5 10.5 12.5 8.5 12.5 C6.5 12.5 4.5 11.5 4.5 9.5 Z" fill="#1e1e1e"/><path d="M8.5 12 V15.5" stroke="#1e1e1e" stroke-width="1.8"/></svg>


<div class="abs" style="left:465px;top:593px;width:948px;height:1px;background:#454545"></div>
<div class="abs" style="left:465px;top:594px;width:948px;height:385px;background:#1e1e1e"></div>
<div class="abs ptab" style="left:485px">PROBLEMS</div>
<div class="abs ptab" style="left:576px">OUTPUT</div>
<div class="abs ptab" style="left:654px">DEBUG CONSOLE</div>
<div class="abs ptab" style="left:780px;color:#e7e7e7">TERMINAL</div>
<div class="abs" style="left:780px;top:621px;width:55px;height:1px;background:#8a8a8a"></div>
<div class="abs" style="left:1107px;top:602px;width:169px;height:20px;background:#3c3c3c;border-radius:3px"></div>
<div class="abs" style="left:1116px;top:602px;height:20px;line-height:20px;font-size:12px;color:#f0f0f0;-webkit-text-stroke:0.3px currentColor">3: node</div>
<svg class="abs" style="left:1265px;top:605px" width="8" height="14"><path d="M1 6 L4 2 L7 6 Z M1 8 L4 12 L7 8 Z" fill="#dddddd"/></svg>
<svg class="abs" style="left:1294px;top:605px" width="14" height="14"><path d="M7 1.5 V12.5 M1.5 7 H12.5" stroke="#e8e8e8" stroke-width="2.8"/></svg>
<svg class="abs" style="left:1325px;top:604px" width="12" height="15" viewBox="0 0 12 15"><path d="M1 3 H11 M4.5 3 V1.5 H7.5 V3" fill="none" stroke="#e0e0e0" stroke-width="1.4"/><path d="M2 4.5 H10 V14 H2 Z" fill="#e0e0e0"/><path d="M4.3 6 V12.5 M6 6 V12.5 M7.7 6 V12.5" stroke="#1e1e1e" stroke-width="0.9"/></svg>
<svg class="abs" style="left:1356px;top:606px" width="14" height="10"><path d="M1.5 8 L7 2.5 L12.5 8" fill="none" stroke="#e8e8e8" stroke-width="2"/></svg>
<svg class="abs" style="left:1389px;top:606px" width="12" height="12"><path d="M2 2 L10 10 M10 2 L2 10" stroke="#e8e8e8" stroke-width="2.2"/></svg>
<div class="tl2" style="top:642px"><span class="xd">       },</span></div>
<div class="tl2" style="top:656px"><span class="xd">     ]</span></div>
<div class="tl2" style="top:670px"></div>
<div class="tl2" style="top:684px"><span class="xd">      at store.dispatch.then (</span><span class="xl">src/__test__/actions.test.js</span><span class="xd">:104:34)</span></div>
<div class="tl2" style="top:698px"><span class="xd">          at &lt;anonymous&gt;</span></div>
<div class="tl2" style="top:712px"><span class="xd">      at process._tickCallback (</span><span class="xl">internal/process/next_tick.js</span><span class="xd">:188:7)</span></div>
<div class="tl2" style="top:726px"></div>
<div class="tl2" style="top:740px"><span class="xpass"> PASS </span><span class="xd"> src/containers/__test__/</span><span class="xB">ErrorBoundary.test.js</span></div>
<div class="tl2" style="top:754px"><span class="xpass"> PASS </span><span class="xd"> src/components/__test__/</span><span class="xB">UserHeader.test.js</span></div>
<div class="tl2" style="top:768px"><span class="xpass"> PASS </span><span class="xd"> src/components/__test__/</span><span class="xB">Header.test.js</span></div>
<div class="tl2" style="top:782px"><span class="xpass"> PASS </span><span class="xd"> src/__test__/</span><span class="xB">reducer.test.js</span></div>
<div class="tl2" style="top:796px"></div>
<div class="tl2" style="top:810px"><span class="xB">Test Suites: </span><span class="xR">2 failed</span><span class="xd">, </span><span class="xG">4 passed</span><span class="xd">, 6 total</span></div>
<div class="tl2" style="top:824px"><span class="xB">Tests:       </span><span class="xR">3 failed</span><span class="xd">, </span><span class="xG">8 passed</span><span class="xd">, 11 total</span></div>
<div class="tl2" style="top:838px"><span class="xB">Snapshots:   </span><span class="xd">0 total</span></div>
<div class="tl2" style="top:852px"><span class="xB">Time:        </span><span class="xY">28.992s</span></div>
<div class="tl2" style="top:866px"><span class="xd">Ran all test suites related to changed files.</span></div>
<div class="tl2" style="top:880px"></div>
<div class="tl2" style="top:894px"><span class="xB">Watch Usage</span></div>
<div class="tl2" style="top:908px"><span class="xd"> › Press p to filter by a filename regex pattern.</span></div>
<div class="tl2" style="top:922px"><span class="xd"> › Press t to filter by a test name regex pattern.</span></div>
<div class="tl2" style="top:936px"><span class="xd"> › Press q to quit watch mode.</span></div>
<div class="tl2" style="top:950px"><span class="xd"> › Press Enter to trigger a test run.</span></div>
<div class="abs" style="left:485px;top:963px;width:8px;height:14px;border:1px solid #cccccc"></div>
<div class="abs" style="left:0;top:978px;width:1414px;height:1px;background:#201812"></div>
<div id="status" class="abs">
<svg class="abs" style="left:13px;top:4px" width="11" height="15" viewBox="0 0 11 15"><circle cx="2.5" cy="2.5" r="1.6" fill="none" stroke="#fff" stroke-width="1.4"/><circle cx="2.5" cy="12.5" r="1.6" fill="none" stroke="#fff" stroke-width="1.4"/><circle cx="8.5" cy="4" r="1.6" fill="none" stroke="#fff" stroke-width="1.4"/><path d="M2.5 4.1 V10.9 M8.5 5.6 C8.5 9 3 8 2.5 11" fill="none" stroke="#fff" stroke-width="1.4"/></svg>
<span class="sbt" style="left:26px;top:-1px;font-size:12.5px;letter-spacing:0.45px">master*</span>
<svg class="abs" style="left:85px;top:5px" width="13" height="13" viewBox="0 0 13 13"><path d="M2 6.5 A4.5 4.5 0 0 1 10.2 4" fill="none" stroke="#fff" stroke-width="1.4"/><path d="M11 6.5 A4.5 4.5 0 0 1 2.8 9" fill="none" stroke="#fff" stroke-width="1.4"/><path d="M11.5 1.5 V5 H8 Z M1.5 11.5 V8 H5 Z" fill="#fff"/></svg>
<svg class="abs" style="left:109px;top:5px" width="13" height="13" viewBox="0 0 13 13"><circle cx="6.5" cy="6.5" r="5.8" fill="#fff"/><path d="M4 4 L9 9 M9 4 L4 9" stroke="#cc6633" stroke-width="1.6"/></svg>
<span class="sbt" style="left:125px">0</span>
<svg class="abs" style="left:136px;top:5px" width="13" height="12" viewBox="0 0 13 12"><path d="M6.5 0.5 L12.5 11.5 H0.5 Z" fill="#fff"/><path d="M6.5 4 V8 M6.5 9 V10.5" stroke="#cc6633" stroke-width="1.4"/></svg>
<span class="sbt" style="left:152px">1</span>
<span class="sbt" style="left:1004px">Ln 12, Col 1</span>
<span class="sbt" style="left:1084px">Spaces: 2</span>
<span class="sbt" style="left:1155px">UTF-8</span>
<span class="sbt" style="left:1206px">LF</span>
<span class="sbt" style="left:1236px">JavaScript</span>
<svg class="abs" style="left:1309px;top:5px" width="16" height="12" viewBox="0 0 16 12"><path d="M1 6 C4 1, 12 1, 15 6 C12 11, 4 11, 1 6 Z" fill="none" stroke="#fff" stroke-width="1.5"/><circle cx="8" cy="6" r="2.2" fill="#fff"/></svg>
<span class="sbt" style="left:1327px;letter-spacing:0.9px">[off]</span>
<svg class="abs" style="left:1382px;top:3px" width="16" height="16" viewBox="0 0 16 16"><circle cx="8.5" cy="8" r="6.6" fill="#fff"/><ellipse cx="6.3" cy="6.3" rx="0.9" ry="1.2" fill="#555"/><ellipse cx="10.7" cy="6.3" rx="0.9" ry="1.2" fill="#555"/><path d="M4.3 8.8 C5.5 12.3, 11.5 12.3, 12.7 8.8" fill="none" stroke="#555" stroke-width="1.1"/></svg>
<div class="abs" style="left:1413px;top:0;width:1px;height:22px;background:#1e1e1e"></div>
</div>

</body></html>
